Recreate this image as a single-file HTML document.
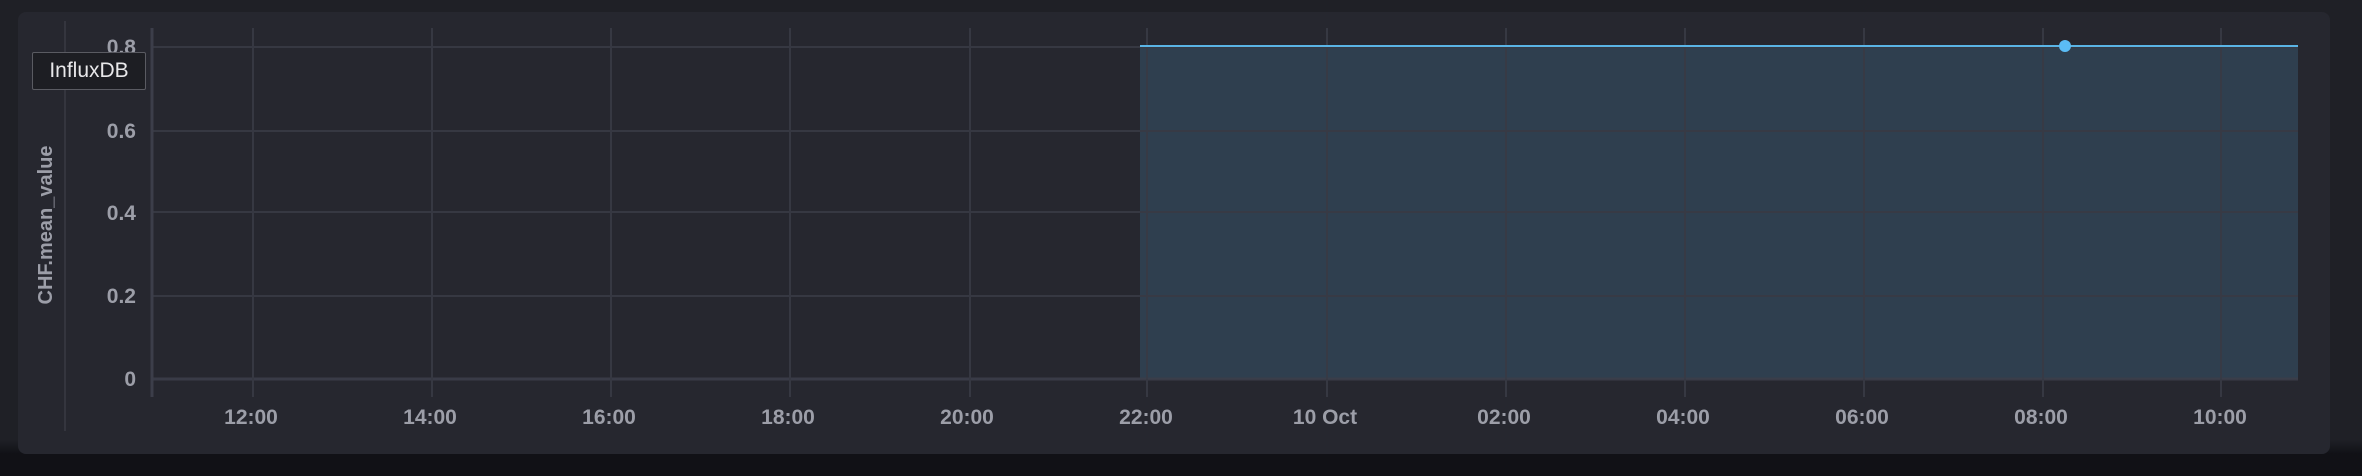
<!DOCTYPE html>
<html><head><style>
html,body{margin:0;padding:0;width:2362px;height:476px;overflow:hidden;background:#1f2026;}
body{background:linear-gradient(#1f2026 0,#1f2026 440px,#111116 454px,#111116 476px);}
.panel{position:absolute;left:18px;top:12px;width:2312px;height:442px;background:#26272f;border-radius:8px;}
svg{position:absolute;left:0;top:0;}
text{font-family:"Liberation Sans",sans-serif;font-weight:bold;fill:#9c9ea8;}
.tip{position:absolute;left:32px;top:52px;width:112px;height:36px;background:#1d1e23;border:1px solid #5a5b62;color:#e8e8ea;font:21px "Liberation Sans",sans-serif;line-height:36px;text-align:center;border-radius:2px;}
</style></head><body>
<div class="panel"></div>
<svg width="2362" height="476">
<line x1="65" y1="21" x2="65" y2="431" stroke="#34353e" stroke-width="2"/>
<rect x="1140" y="46" width="1158" height="333" fill="#2f3f4f"/>
<g stroke="#383a45" stroke-width="2" opacity="0.9">
<line x1="153" y1="47" x2="2298" y2="47"/>
<line x1="153" y1="131" x2="2298" y2="131"/>
<line x1="153" y1="212" x2="2298" y2="212"/>
<line x1="153" y1="296" x2="2298" y2="296"/>
<line x1="153" y1="379" x2="2298" y2="379" stroke="#3c3e4a" stroke-width="3"/>
<line x1="253" y1="28" x2="253" y2="397"/><line x1="432" y1="28" x2="432" y2="397"/><line x1="611" y1="28" x2="611" y2="397"/><line x1="790" y1="28" x2="790" y2="397"/><line x1="970" y1="28" x2="970" y2="397"/><line x1="1147" y1="28" x2="1147" y2="397"/><line x1="1327" y1="28" x2="1327" y2="397"/><line x1="1506" y1="28" x2="1506" y2="397"/><line x1="1685" y1="28" x2="1685" y2="397"/><line x1="1864" y1="28" x2="1864" y2="397"/><line x1="2043" y1="28" x2="2043" y2="397"/><line x1="2221" y1="28" x2="2221" y2="397"/>
</g>
<line x1="152" y1="28" x2="152" y2="397" stroke="#3c3e4a" stroke-width="3"/>
<line x1="1140" y1="46" x2="2298" y2="46" stroke="#5ab4e5" stroke-width="2"/>
<circle cx="2065" cy="46" r="6" fill="#5bbcf5"/>
<g font-size="21" text-anchor="end">
<text x="136" y="54">0.8</text><text x="136" y="138">0.6</text><text x="136" y="220">0.4</text><text x="136" y="303">0.2</text><text x="136" y="386">0</text>
</g>
<g font-size="21" text-anchor="middle">
<text x="251" y="424">12:00</text><text x="430" y="424">14:00</text><text x="609" y="424">16:00</text><text x="788" y="424">18:00</text><text x="967" y="424">20:00</text><text x="1146" y="424">22:00</text><text x="1325" y="424">10 Oct</text><text x="1504" y="424">02:00</text><text x="1683" y="424">04:00</text><text x="1862" y="424">06:00</text><text x="2041" y="424">08:00</text><text x="2220" y="424">10:00</text>
</g>
<text x="0" y="0" font-size="20" font-weight="normal" text-anchor="middle" transform="translate(52,225) rotate(-90)">CHF.mean_value</text>
</svg>
<div class="tip">InfluxDB</div>
</body></html>
